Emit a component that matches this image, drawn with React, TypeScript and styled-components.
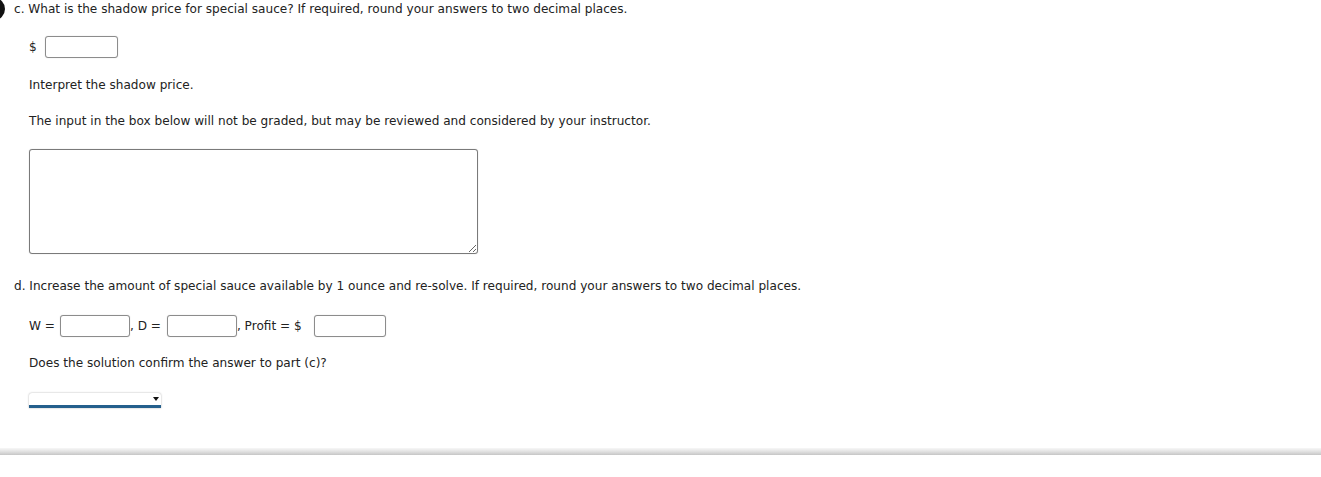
import * as React from 'react';
import styled, { createGlobalStyle } from 'styled-components';

const GlobalStyle = createGlobalStyle`
    body {
        margin: 0;
        background: #fff;
        font-family: "DejaVu Sans", Verdana, sans-serif;
        font-size: 12.1px;
        color: #222;
    }
`;

const Page = styled.div`
    position: relative;
    padding-left: 14px;
    overflow: hidden;
    height: 477px;
`;

const NumberBadge = styled.span`
    position: absolute;
    left: -16px;
    top: -2px;
    width: 21px;
    height: 22px;
    border-radius: 50%;
    background: #111;
`;

const Question = styled.p<{ $top?: number }>`
    margin: ${p => p.$top ?? 0}px 0 0 0;
    line-height: 18px;
`;

const Body = styled.div`
    padding-left: 15px;
`;

const Text = styled.p<{ $top: number }>`
    margin: ${p => p.$top}px 0 0 0;
    line-height: 18px;
`;

const Row = styled.div<{ $top: number }>`
    display: flex;
    align-items: center;
    margin-top: ${p => p.$top}px;
    height: 22px;
`;

const Label = styled.span<{ $gap?: number }>`
    margin-right: ${p => p.$gap ?? 6}px;
    white-space: pre;
`;

const Field = styled.input<{ $w: number }>`
    box-sizing: border-box;
    width: ${p => p.$w}px;
    height: 22px;
    border: 1px solid #8c8c8c;
    border-radius: 3px;
    box-shadow: 0 0 1px rgba(0, 0, 0, 0.25);
    background: #fff;
    padding: 0 4px;
    margin: 0;
    font: inherit;
`;

const Comment = styled.textarea`
    display: block;
    box-sizing: border-box;
    margin-top: 19px;
    width: 449px;
    height: 105px;
    border: 1px solid #7a7a7a;
    border-radius: 3px;
    box-shadow: 0 0 1px rgba(0, 0, 0, 0.3);
    font: inherit;
    padding: 4px;
`;

const SelectBox = styled.div`
    position: relative;
    margin-top: 21px;
    box-sizing: border-box;
    width: 132px;
    height: 15px;
    background: #fff;
    border-radius: 3px 3px 0 0;
    box-shadow: 0 0 2px rgba(0, 0, 0, 0.35);
    border-bottom: 3px solid #245f8c;
`;

const Caret = styled.span`
    position: absolute;
    right: 2px;
    top: 4px;
    width: 0;
    height: 0;
    border-left: 3px solid transparent;
    border-right: 3px solid transparent;
    border-top: 4px solid #111;
`;

const Divider = styled.div`
    margin: 40px -1px 0 -14px;
    height: 7px;
    background: linear-gradient(to bottom, #f7f7f7 0%, #e6e6e6 40%, #cfcfcf 85%, #c4c4c4 100%);
`;

export default function App() {
    return (
        <Page>
            <GlobalStyle />
            <NumberBadge />
            <Question>c. What is the shadow price for special sauce? If required, round your answers to two decimal places.</Question>
            <Body>
                <Row $top={18}>
                    <Label $gap={8}>$</Label>
                    <Field $w={73} />
                </Row>
                <Text $top={18}>Interpret the shadow price.</Text>
                <Text $top={18}>The input in the box below will not be graded, but may be reviewed and considered by your instructor.</Text>
                <Comment />
            </Body>
            <Question $top={23}>d. Increase the amount of special sauce available by 1 ounce and re-solve. If required, round your answers to two decimal places.</Question>
            <Body>
                <Row $top={20}>
                    <Label $gap={5}>W =</Label>
                    <Field $w={70} />
                    <Label $gap={6}>, D =</Label>
                    <Field $w={70} />
                    <Label $gap={12}>, Profit = $</Label>
                    <Field $w={72} />
                </Row>
                <Text $top={17}>Does the solution confirm the answer to part (c)?</Text>
                <SelectBox>
                    <Caret />
                </SelectBox>
            </Body>
            <Divider />
        </Page>
    );
}
